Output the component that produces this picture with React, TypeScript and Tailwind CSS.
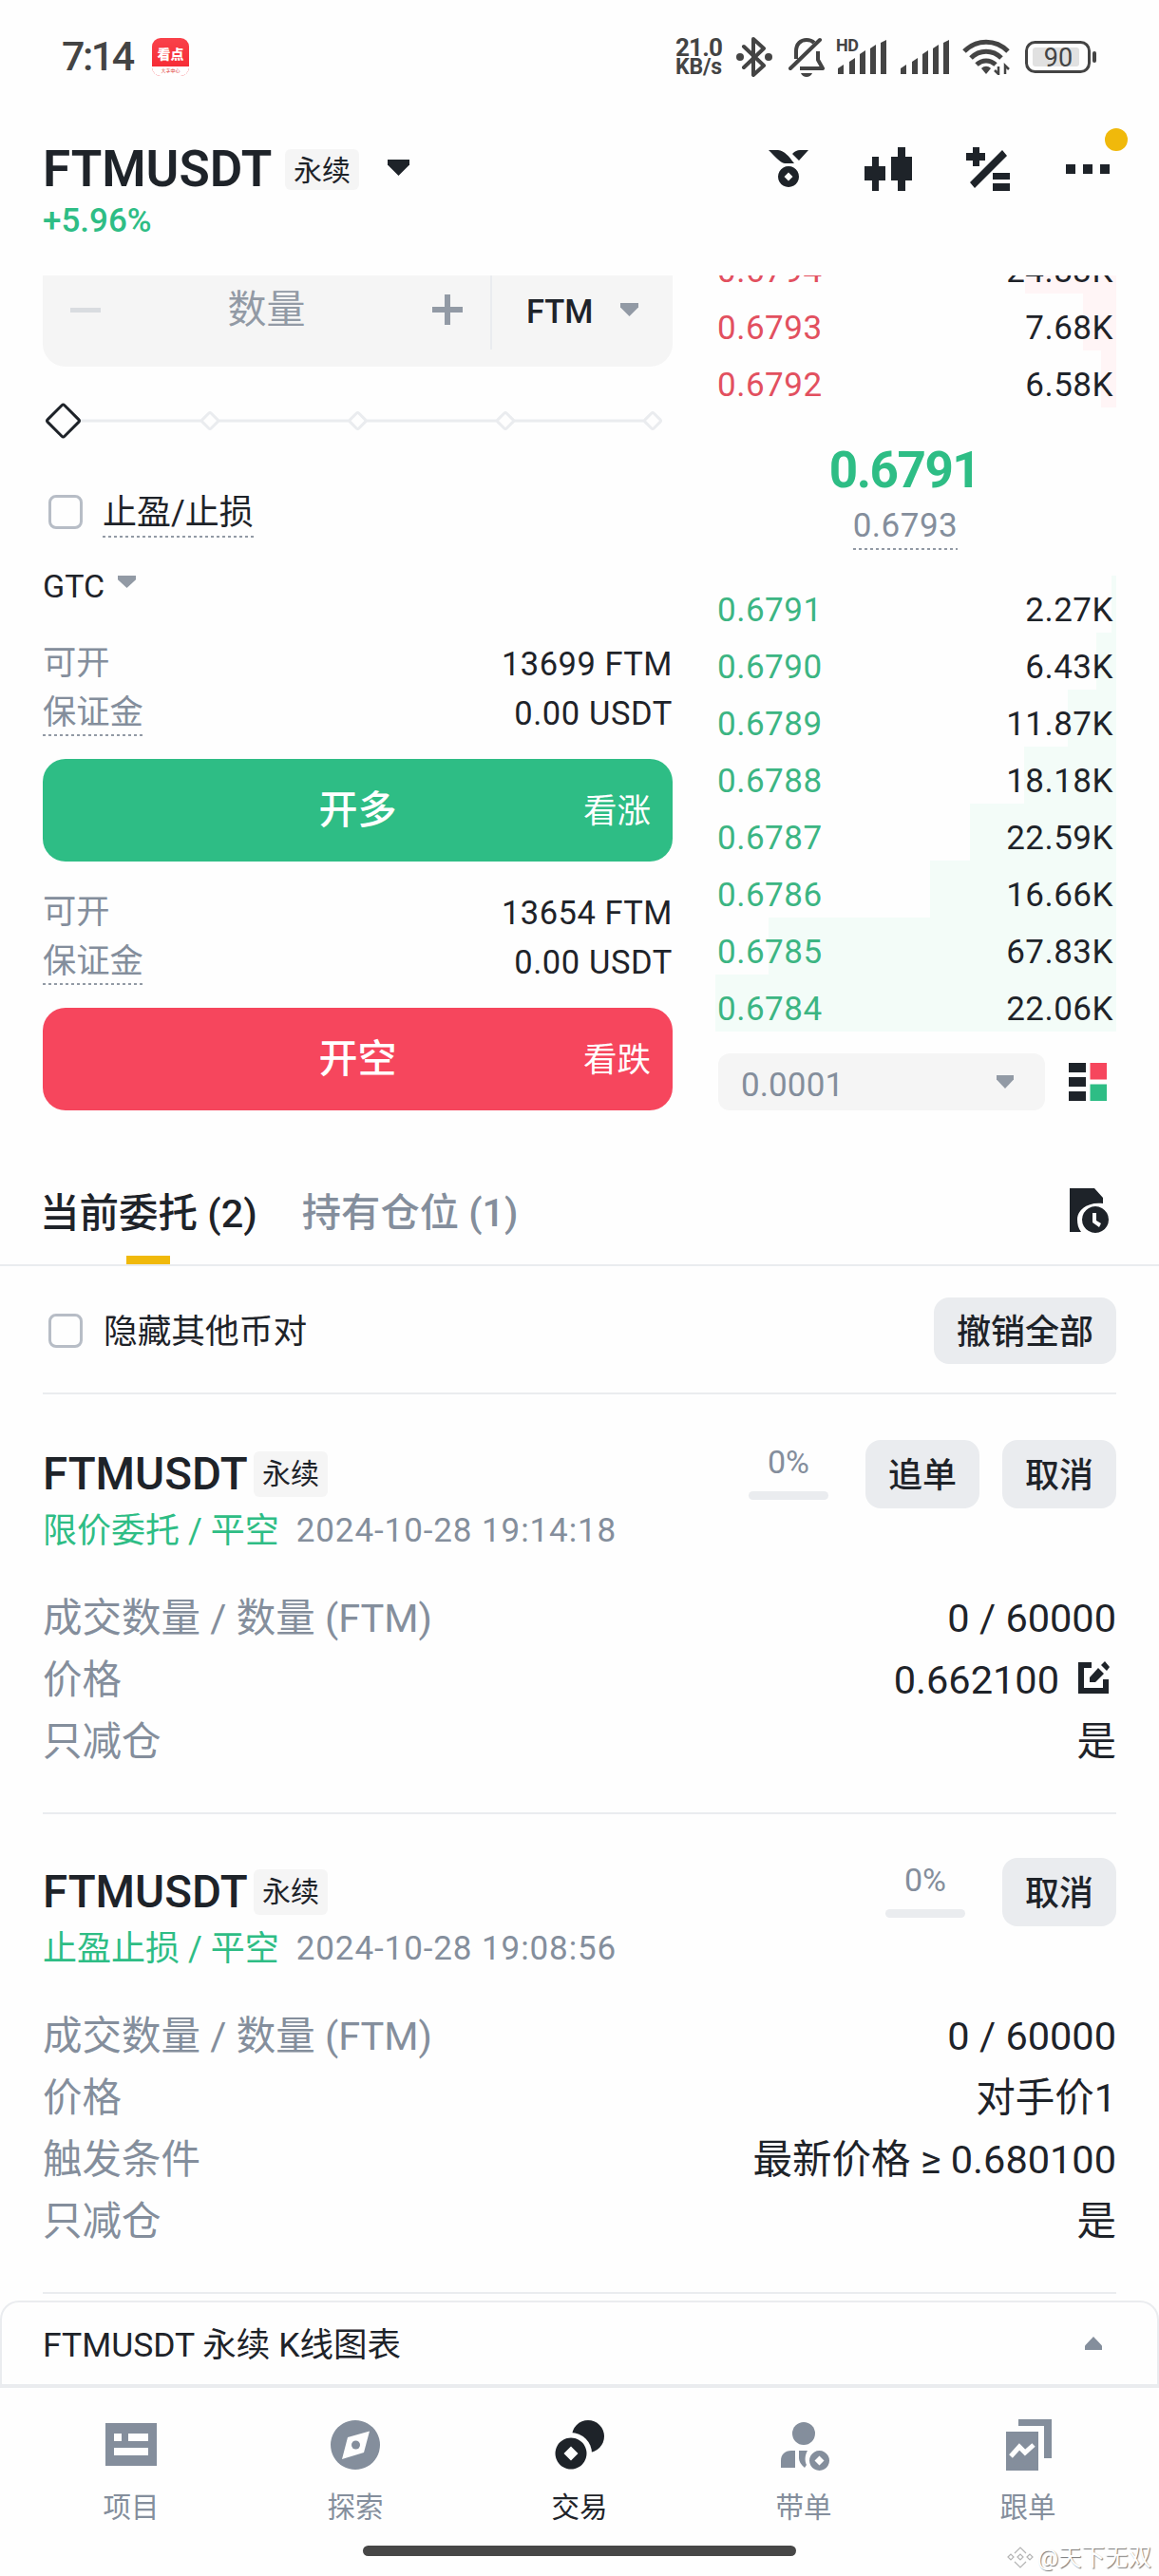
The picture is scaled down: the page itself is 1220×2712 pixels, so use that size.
import type { ReactNode } from "react"

type BookRow = { price: string; size: string; depth: number }

const asks: BookRow[] = [
  { price: "0.6794", size: "24.83K", depth: 96 },
  { price: "0.6793", size: "7.68K", depth: 35 },
  { price: "0.6792", size: "6.58K", depth: 16 },
]

const bids: BookRow[] = [
  { price: "0.6791", size: "2.27K", depth: 5 },
  { price: "0.6790", size: "6.43K", depth: 21 },
  { price: "0.6789", size: "11.87K", depth: 51 },
  { price: "0.6788", size: "18.18K", depth: 97 },
  { price: "0.6787", size: "22.59K", depth: 154 },
  { price: "0.6786", size: "16.66K", depth: 196 },
  { price: "0.6785", size: "67.83K", depth: 366 },
  { price: "0.6784", size: "22.06K", depth: 422 },
]

type Order = {
  type: string
  time: string
  actions: string[]
  rows: { label: string; value: string; editable?: boolean }[]
}

const orders: Order[] = [
  {
    type: "限价委托 / 平空",
    time: "2024-10-28 19:14:18",
    actions: ["追单", "取消"],
    rows: [
      { label: "成交数量 / 数量 (FTM)", value: "0 / 60000" },
      { label: "价格", value: "0.662100", editable: true },
      { label: "只减仓", value: "是" },
    ],
  },
  {
    type: "止盈止损 / 平空",
    time: "2024-10-28 19:08:56",
    actions: ["取消"],
    rows: [
      { label: "成交数量 / 数量 (FTM)", value: "0 / 60000" },
      { label: "价格", value: "对手价1" },
      { label: "触发条件", value: "最新价格 ≥ 0.680100" },
      { label: "只减仓", value: "是" },
    ],
  },
]

function Caret({ className }: { className?: string }) {
  return (
    <svg viewBox="0 0 20 14" className={className} fill="currentColor" preserveAspectRatio="none">
      <path d="M0 0h20v4.500L10 14 0 4.500z" />
    </svg>
  )
}

// text with a fine dashed line under it
function Hinted({ className, children }: { className: string; children: ReactNode }) {
  return (
    <span className="flex flex-col">
      <span className={className}>{children}</span>
      <span className="h-[2px] bg-[repeating-linear-gradient(90deg,#929aa5_0_3px,transparent_3px_6px)]" />
    </span>
  )
}

function Signal({ className }: { className: string }) {
  return (
    <svg viewBox="0 0 53 36" className={className} fill="currentColor">
      <path d="M1 30l6-4v10H1zM13 23l6-4v17h-6zM24 15l6-4v25h-6zM35 9l6-4v31h-6zM46 3l6-3v36h-6z" />
    </svg>
  )
}

function StatusBar() {
  return (
    <div className="flex h-[119px] shrink-0 items-center px-[65px] text-[#444]">
      <span className="w-[76px] text-[43px] font-medium tracking-[-2.500px]">7:14</span>
      <div className="ml-[19px] flex h-[40px] w-[39px] flex-col items-center overflow-hidden rounded-[9px] bg-gradient-to-b from-[#f9414a] to-[#f5222d]">
        <span className="flex h-[30px] items-center pt-[5px] text-[14px] font-black leading-none text-white">看点</span>
        <span className="flex h-[10px] w-full items-center justify-center bg-white text-[5px] leading-none text-[#d33]">
          大字中心
        </span>
      </div>
      <div className="ml-auto flex items-center">
        <div className="flex w-[52px] flex-col font-bold">
          <span className="h-[22px] text-[26px] leading-[22px] tracking-[-0.800px]">21.0</span>
          <span className="h-[20px] text-[23px] leading-[20px] tracking-[-0.200px]">KB/s</span>
        </div>
        <svg viewBox="0 0 38 42" className="ml-[12px] h-[42px] w-[38px]" fill="none" stroke="currentColor" strokeWidth="4">
          <path d="M8 10l21 20-11 10V2l11 10L8 32" strokeLinejoin="round" strokeLinecap="round" />
          <circle cx="4" cy="21" r="4" fill="currentColor" stroke="none" />
          <circle cx="34" cy="21" r="4" fill="currentColor" stroke="none" />
        </svg>
        <svg viewBox="0 0 38 42" className="ml-[17px] h-[42px] w-[38px]" fill="none" stroke="currentColor" strokeWidth="4">
          <path d="M8 23V15C8 7 13 3 19 3c3 0 6 1 8 3M31 15v9l5 9H12" strokeLinejoin="round" />
          <path d="M2 33L33 3" strokeLinecap="round" />
          <path d="M13 38h12c-1 2.500-3.500 4-6 4s-5-1.500-6-4z" fill="currentColor" stroke="none" />
        </svg>
        <div className="relative ml-[13px]">
          <Signal className="h-[36px] w-[53px]" />
          <span className="absolute -left-[1px] -top-[3px] text-[18px] font-bold leading-[18px] tracking-[-0.500px]">HD</span>
        </div>
        <Signal className="ml-[13px] h-[36px] w-[53px]" />
        <svg viewBox="0 0 50 38" className="ml-[13px] h-[38px] w-[50px]" fill="none" stroke="currentColor" strokeWidth="5">
          <path d="M2 13C15 0 35 0 48 13M9 20c9-9 23-9 32 0M15 27c6-5.500 14-5.500 20 0" />
          <path d="M20 31c3-3 7-3 10 0l-5 6z" fill="currentColor" stroke="none" />
          <path d="M38 29v8l-4-4M45 37v-9l4 4" strokeWidth="2.500" />
        </svg>
        <svg viewBox="0 0 76 34" className="ml-[16px] h-[34px] w-[76px]">
          <rect x="1.500" y="1.500" width="66" height="31" rx="9" fill="none" stroke="#444" strokeWidth="3" />
          <rect x="8" y="7" width="49" height="20" rx="3" fill="#e1e1e1" />
          <rect x="71" y="11" width="4" height="12" rx="2" fill="#444" />
          <text x="35" y="27" textAnchor="middle" fontSize="27" fill="#444">
            90
          </text>
        </svg>
      </div>
    </div>
  )
}

function Header() {
  return (
    <header className="relative h-[171px] shrink-0 pl-[45px] pr-[52px] pt-[32px]">
      <div className="flex h-[54px] items-center">
        <h1 className="w-[243px] text-[53px] font-semibold leading-[54px]">FTMUSDT</h1>
        <span className="ml-[12px] h-[43px] w-[78px] rounded-[6px] bg-[#f5f5f5] text-center text-[30px] leading-[45px]">永续</span>
        <Caret className="mb-[3px] ml-[30px] h-[17px] w-[23px]" />
        <div className="ml-auto flex items-center">
          <svg viewBox="0 0 42 40" className="h-[40px] w-[42px]" fill="currentColor">
            <path d="M0 0h10c7 1 11 6 17 14H17C12 13 7 7 0 0zM25 4c3-3 5-4 8-4h9L32 11z" />
            <path
              fillRule="evenodd"
              d="M21 17a11 11 0 1 0 .01 0zM21 23.500l4.500 4.500-4.500 4.500-4.500-4.500z"
            />
          </svg>
          <svg viewBox="0 0 50 46" className="ml-[59px] h-[46px] w-[50px]" fill="currentColor">
            <path d="M8 10h7v10h7v15h-7v11H8V35H0V20h8zM35 0h8v10h7v25h-7v11h-8V35h-7V10h7z" />
          </svg>
          <svg viewBox="0 0 46 46" className="ml-[57px] h-[46px] w-[46px]" fill="currentColor">
            <path d="M7 0h7v6h6v8h-6v6H7v-6H0V6h7zM38 3l5 6L9 43l-5-6zM28 27h18v7H28zM28 38h18v8H28z" />
          </svg>
          <svg viewBox="0 0 46 10" className="ml-[59px] h-[10px] w-[46px]" fill="currentColor">
            <path d="M0 0h10v10H0zM18 0h10v10H18zM36 0h10v10H36z" />
          </svg>
        </div>
      </div>
      <p className="pt-px text-[35px] font-medium leading-[54px] text-[#2ebd85]">+5.96%</p>
      <span className="absolute right-[33px] top-[16px] size-[24px] rounded-full bg-[#f0b90b]" />
    </header>
  )
}

function Checkbox() {
  return <span className="block size-[36px] rounded-[8px] border-[3px] border-[#b7bdc6]" />
}

function AmountSlider() {
  return (
    <svg viewBox="0 0 663 46" className="mt-[34px] h-[46px] w-[663px]" fill="#fefefe">
      <path d="M22 23h620" stroke="#eaecef" strokeWidth="3" />
      {[176, 331.5, 487, 642].map((x) => (
        <rect
          key={x}
          x="-6.500"
          y="-6.500"
          width="13"
          height="13"
          rx="2"
          transform={`translate(${x} 23) rotate(45)`}
          stroke="#eaecef"
          strokeWidth="3"
        />
      ))}
      <rect x="-12.500" y="-12.500" width="25" height="25" rx="2" transform="translate(21.500 23) rotate(45)" stroke="#1e2329" strokeWidth="3" />
    </svg>
  )
}

function Available({ max, children }: { max: string; children: ReactNode }) {
  return (
    <div>
      <div className="flex h-[54px] items-center justify-between text-[34.500px] tracking-[0.500px]">
        <span className="text-[35.300px] tracking-normal text-[#848e9c]">可开</span>
        <span>{max}</span>
      </div>
      <div className="flex h-[51px] items-center justify-between text-[34.500px] tracking-[0.600px]">
        <Hinted className="text-[35.300px] leading-[45px] tracking-normal text-[#848e9c]">保证金</Hinted>
        <span>0.00 USDT</span>
      </div>
      {children}
    </div>
  )
}

function OrderForm() {
  return (
    <div className="w-[663px]">
      <div className="flex h-[96px] items-start rounded-b-[24px] bg-[#f5f5f5]">
        <div className="flex h-[72px] flex-1 items-center justify-between pl-[29px] pr-[29px] text-[#929aa5]">
          <span className="h-[5px] w-[32px] bg-[#d9dce0]" />
          <span className="pt-px text-[41px]">数量</span>
          <svg viewBox="0 0 32 32" className="size-[32px]" fill="currentColor">
            <path d="M13 0h6v13h13v6H19v13h-6V19H0v-6h13z" />
          </svg>
        </div>
        <span className="h-[78px] w-[2px] bg-[#eaecef]" />
        <div className="flex h-[72px] w-[190px] items-center pl-[36px] text-[34.500px] font-medium">
          <span className="pt-[5px]">FTM</span>
          <Caret className="ml-auto mr-[36px] h-[14px] w-[19px] text-[#929aa5]" />
        </div>
      </div>
      <AmountSlider />
      <div className="mt-[47px] flex h-[52px] items-center pl-[6px]">
        <Checkbox />
        <span className="ml-[21px]">
          <Hinted className="pt-[3px] text-[36px] leading-[48px]">止盈/止损</Hinted>
        </span>
      </div>
      <div className="mt-[33px] flex h-[36px] items-center text-[34px]">
        <span className="pt-px">GTC</span>
        <Caret className="mb-[7px] ml-[14px] h-[13px] w-[19px] text-[#929aa5]" />
      </div>
      <div className="mt-[38px]">
        <Available max="13699 FTM">
          <button className="mt-[22px] flex h-[108px] w-full items-center rounded-[24px] bg-[#2ebd85] pl-[94px] pr-[23px] text-white">
            <span className="flex-1 pt-px text-[41px] font-medium">开多</span>
            <span className="pt-[3px] text-[35.500px]">看涨</span>
          </button>
        </Available>
      </div>
      <div className="mt-[27px]">
        <Available max="13654 FTM">
          <button className="mt-[22px] flex h-[108px] w-full items-center rounded-[24px] bg-[#f6465d] pl-[94px] pr-[23px] text-white">
            <span className="flex-1 pt-px text-[41px] font-medium">开空</span>
            <span className="pt-[3px] text-[35.500px]">看跌</span>
          </button>
        </Available>
      </div>
    </div>
  )
}

function BookLine({ row, side }: { row: BookRow; side: "ask" | "bid" }) {
  const ask = side === "ask"
  return (
    <div className="relative h-[60px] pl-[2px] pr-[3px] pt-[12px] text-[35px] leading-[49px] tracking-[0.500px]">
      <span
        className={ask ? "absolute inset-y-0 right-0 bg-[#fff5f6]" : "absolute inset-y-0 right-0 bg-[#f3fcf8]"}
        style={{ width: row.depth }}
      />
      <div className="relative flex justify-between">
        <span className={ask ? "text-[#e2505f]" : "text-[#3cb583]"}>{row.price}</span>
        <span>{row.size}</span>
      </div>
    </div>
  )
}

function OrderBook() {
  return (
    <div className="w-[422px]">
      <div className="-mt-[41px]">
        {asks.map((row) => (
          <BookLine key={row.price} row={row} side="ask" />
        ))}
      </div>
      <p className="mt-[36px] h-[60px] pr-[24px] text-center text-[53px] font-bold leading-[60px] tracking-[-1.500px] text-[#2ebd85]">
        0.6791
      </p>
      <div className="mt-[4px] flex justify-center text-[#848e9c]">
        <span className="mr-[22px]">
          <Hinted className="pt-px text-[35px] leading-[47px] tracking-[0.500px]">0.6793</Hinted>
        </span>
      </div>
      <div className="mt-[27px]">
        {bids.map((row) => (
          <BookLine key={row.price} row={row} side="bid" />
        ))}
      </div>
      <div className="mt-[23px] flex items-center">
        <div className="ml-[3px] flex h-[60px] w-[344px] items-center justify-between rounded-[12px] bg-[#f5f5f5] pl-[24px] pr-[33px] text-[#848e9c]">
          <span className="pt-[6px] text-[35px] tracking-[0.100px]">0.0001</span>
          <Caret className="h-[14px] w-[18px] text-[#929aa5]" />
        </div>
        <svg viewBox="0 0 40 40" className="ml-[25px] size-[40px]">
          <path d="M0 0h18v10H0zM0 15h18v10H0zM0 30h18v10H0z" fill="#1e2329" />
          <path d="M22.500 0H40v17.500H22.500z" fill="#f6465d" />
          <path d="M22.500 22.500H40V40H22.500z" fill="#2ebd85" />
        </svg>
      </div>
    </div>
  )
}

function OrderTabs() {
  return (
    <div className="mt-[52px] flex h-[109px] shrink-0 items-center border-b-2 border-[#eaecef] pl-[42px] pr-[45px] text-[41.500px] font-medium">
      <div className="relative flex h-full items-center pt-px">
        当前委托 (2)
        <span className="absolute bottom-0 left-1/2 h-[9px] w-[46px] -translate-x-1/2 bg-[#f0b90b]" />
      </div>
      <div className="ml-[47px] pt-px text-[41.300px] text-[#848e9c]">持有仓位 (1)</div>
      <svg viewBox="0 0 42 48" className="mb-[5px] ml-auto mr-[7px] h-[48px] w-[42px]" fill="currentColor">
        <path d="M0 0h26l9 10v6C20 14 8 22 8 33c0 5 1 9 4 13H0z" />
        <path fillRule="evenodd" d="M27 19a14 14 0 1 0 .01 0zM24 26h4v8l5 3-2 4-7-5z" />
      </svg>
    </div>
  )
}

function EditIcon() {
  return (
    <svg viewBox="0 0 34 34" className="mb-[6px] ml-[20px] mr-[6px] size-[34px]" fill="currentColor">
      <path d="M0 1h14v6H6v21h20v-9h6v15H0z" />
      <path d="M12 17l9-10 6 6-9 9h-6zM24 4l4-4 5 6-3 4z" />
    </svg>
  )
}

function OrderCard({ order }: { order: Order }) {
  return (
    <section className="mx-[45px] border-b-2 border-[#eaecef] pb-[42px]">
      <div className="flex h-[72px] items-center">
        <h2 className="w-[215px] pt-[2px] text-[47.500px] font-medium leading-none">FTMUSDT</h2>
        <span className="ml-[7px] h-[48px] w-[78px] rounded-[6px] bg-[#f5f5f5] text-center text-[30px] leading-[47px]">永续</span>
        <div className="ml-auto flex">
          <div className="mr-[39px] w-[84px] text-center text-[34px] leading-[46px] text-[#848e9c]">
            0%
            <div className="mt-[8px] h-[9px] rounded-full bg-[#eaecef]" />
          </div>
          <div className="flex gap-6">
            {order.actions.map((action) => (
              <button key={action} className="h-[72px] w-[120px] rounded-[16px] bg-[#eaecef] pt-[3px] text-[36px] font-medium">
                {action}
              </button>
            ))}
          </div>
        </div>
      </div>
      <div className="flex h-[47px] items-center text-[36px]">
        <span className="text-[#2ebd85]">{order.type}</span>
        <span className="ml-[18px] text-[35px] tracking-[0.900px] text-[#848e9c]">{order.time}</span>
      </div>
      <dl className="mt-[36px] text-[41.500px]">
        {order.rows.map((row) => (
          <div key={row.label} className="flex h-[65px] items-center justify-between">
            <dt className="text-[#848e9c]">{row.label}</dt>
            <dd className="flex items-center">
              {row.value}
              {row.editable && <EditIcon />}
            </dd>
          </div>
        ))}
      </dl>
    </section>
  )
}

const navItems: { label: string; active?: boolean; icon: ReactNode }[] = [
  {
    label: "项目",
    icon: <path fillRule="evenodd" d="M1 5h54v45H1zM10 16v8h8v-8zM25 16v8h21v-8zM10 31v8h36v-8z" />,
  },
  {
    label: "探索",
    icon: (
      <>
        <path fillRule="evenodd" d="M28 2a26 26 0 1 0 .01 0zM43 13.500L37 36 14 43l6-23z" />
        <circle cx="28.500" cy="28" r="4.500" />
      </>
    ),
  },
  {
    label: "交易",
    active: true,
    icon: (
      <>
        <circle cx="37" cy="19" r="17" />
        <circle cx="19" cy="37" r="22" fill="#fefefe" />
        <path fillRule="evenodd" d="M19 20.500a16.500 16.500 0 1 0 .01 0zM19 29.500l7.500 7.500-7.500 7.500-7.500-7.500z" />
      </>
    ),
  },
  {
    label: "带单",
    icon: (
      <>
        <circle cx="28" cy="16" r="12" />
        <path d="M4 52V45c0-7 4-11 11-11h4v18zM23 34h9c-3 5-3 11-1 15l-2 3c-4-3-6-7-6-10z" />
        <path fillRule="evenodd" d="M44.500 34a10.500 10.500 0 1 0 .01 0zM44.500 39.500l5 5-5 5-5-5z" />
      </>
    ),
  },
  {
    label: "跟单",
    icon: (
      <>
        <path d="M18 1h35v41h-8V8H18z" />
        <path d="M5 14h34v41H5z" />
        <path d="M10 40l9-10 6 6 9-8" fill="none" stroke="#fefefe" strokeWidth="5" />
      </>
    ),
  },
]

function BottomNav() {
  return (
    <nav className="flex flex-1 flex-col px-[20px] pt-[32px]">
      <div className="flex">
        {navItems.map((item) => (
          <div
            key={item.label}
            className={item.active ? "flex flex-1 flex-col items-center" : "flex flex-1 flex-col items-center text-[#848e9c]"}
          >
            <svg viewBox="0 0 56 56" className="size-[56px]" fill="currentColor">
              {item.icon}
            </svg>
            <span className="mt-[18px] h-[39px] text-[29.500px] leading-[40px]">{item.label}</span>
          </div>
        ))}
      </div>
      <div className="mx-auto mt-[21px] h-[11px] w-[456px] rounded-full bg-[#474747]" />
    </nav>
  )
}

function Watermark() {
  return (
    <div className="absolute bottom-[3px] right-[8px] flex items-center gap-[4px]">
      <svg viewBox="0 0 28 24" className="h-[24px] w-[28px]" fill="none" stroke="#b4b4b4" strokeWidth="1.200">
        <path d="M8 7l6-6 6 6M1 11l3-3 3 3-3 3zM21 11l3-3 3 3-3 3zM11 11l3-3 3 3-3 3zM8 16l6 6 6-6" />
      </svg>
      <span className="text-[24.500px] leading-[32px] text-white [text-shadow:1px_1px_1px_#777]">@天下无双</span>
    </div>
  )
}

export default function App() {
  return (
    <div className="relative flex h-[2712px] w-[1220px] flex-col overflow-hidden bg-[#fefefe] font-[Roboto,'Noto_Sans_CJK_SC',sans-serif] leading-none text-[#1e2329]">
      <StatusBar />
      <Header />
      <main className="flex h-[882px] shrink-0 justify-between overflow-hidden px-[45px]">
        <OrderForm />
        <OrderBook />
      </main>
      <OrderTabs />
      <div className="mx-[45px] flex h-[135px] shrink-0 items-center border-b-2 border-[#eaecef] pl-[6px] pt-[3px]">
        <Checkbox />
        <span className="ml-[22px] pt-[3px] text-[35.700px]">隐藏其他币对</span>
        <button className="ml-auto h-[70px] w-[192px] rounded-[16px] bg-[#eaecef] pt-[3px] text-[36px] font-medium">撤销全部</button>
      </div>
      <div className="flex shrink-0 flex-col gap-[46px] pt-[48px]">
        {orders.map((order) => (
          <OrderCard key={order.time} order={order} />
        ))}
      </div>
      <div className="mt-[7px] flex h-[92px] shrink-0 items-center justify-between rounded-t-[20px] border-2 border-b-4 border-[#eaecef] pl-[43px] pr-[58px] text-[35.500px]">
        <span className="pt-[6px]">FTMUSDT 永续 K线图表</span>
        <Caret className="h-[14px] w-[18px] rotate-180 text-[#848e9c]" />
      </div>
      <BottomNav />
      <Watermark />
    </div>
  )
}
